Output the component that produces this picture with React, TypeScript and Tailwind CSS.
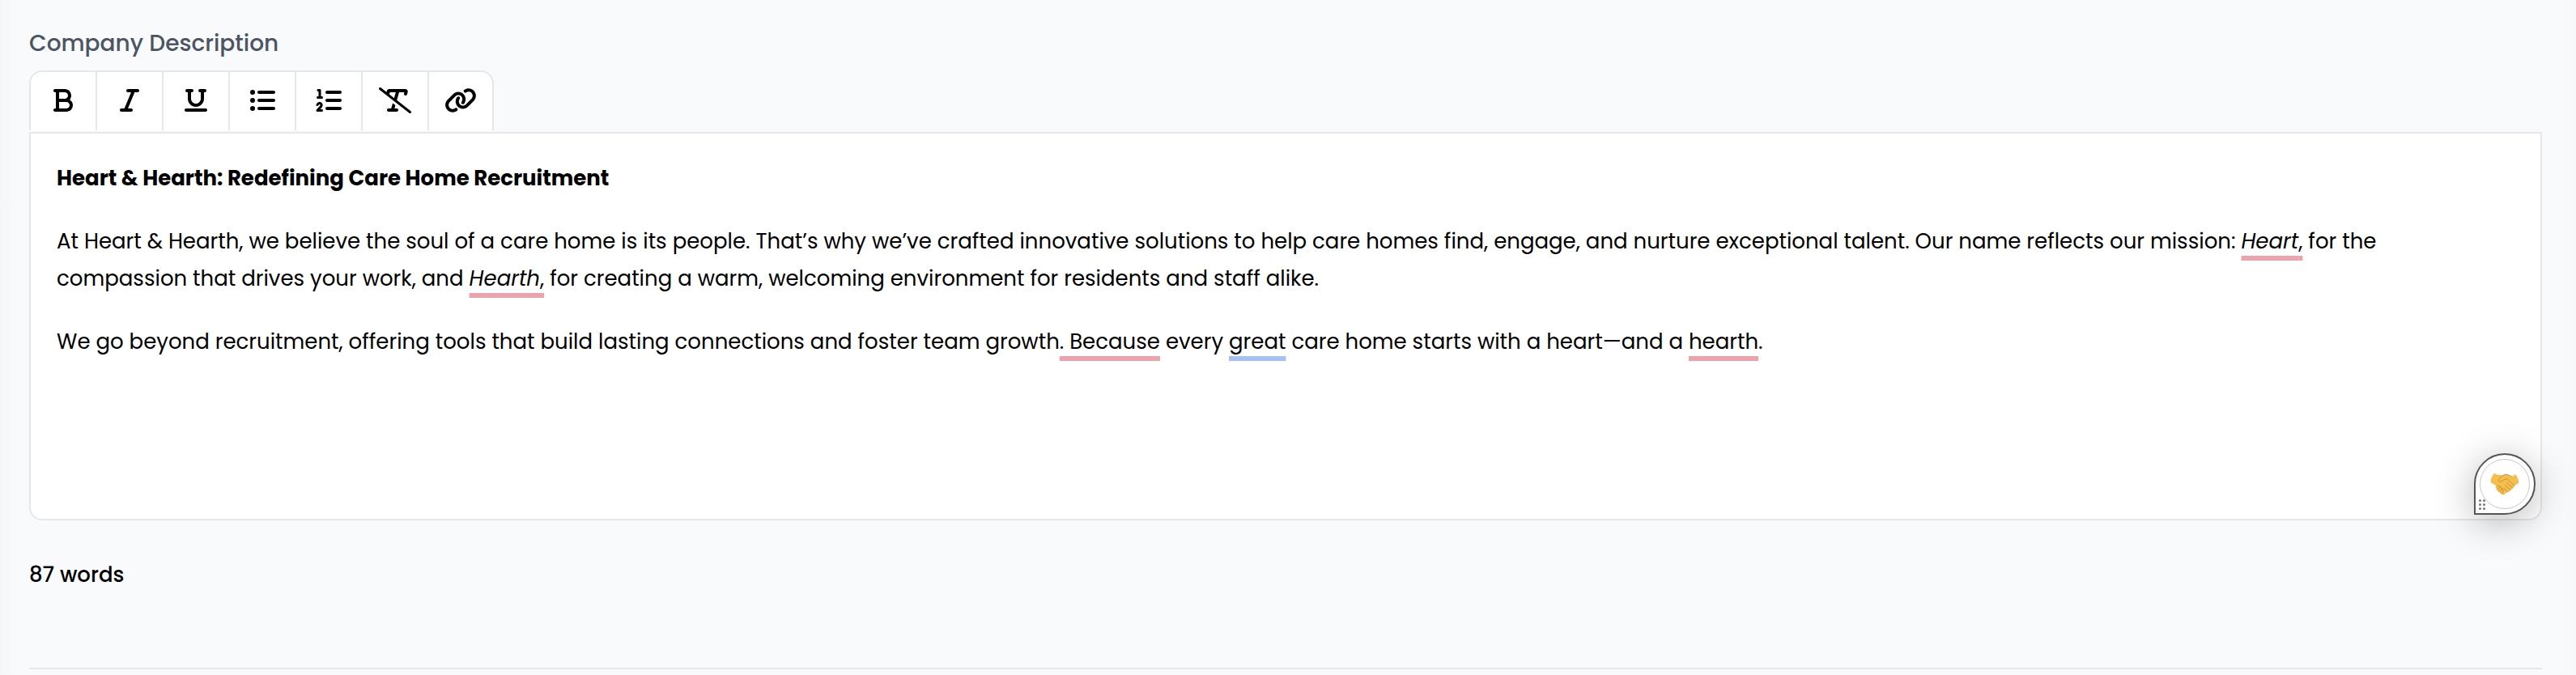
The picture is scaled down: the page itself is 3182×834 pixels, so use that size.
import { useState } from "react"
import type { IconType } from "react-icons"
import {
  FaBold,
  FaItalic,
  FaLink,
  FaListOl,
  FaListUl,
  FaTextSlash,
  FaUnderline,
} from "react-icons/fa6"

interface Tool {
  label: string
  icon: IconType
  size: string
}

const tools: Tool[] = [
  { label: "Bold", icon: FaBold, size: "h-8 w-6" },
  { label: "Italic", icon: FaItalic, size: "h-8 w-6" },
  { label: "Underline", icon: FaUnderline, size: "h-8 w-7" },
  { label: "Bulleted list", icon: FaListUl, size: "h-8 w-8" },
  { label: "Numbered list", icon: FaListOl, size: "h-8 w-8" },
  { label: "Clear formatting", icon: FaTextSlash, size: "h-8 w-10" },
  { label: "Link", icon: FaLink, size: "h-8 w-10" },
]

const error =
  "underline decoration-[#eba3ae] decoration-[6px] underline-offset-[9px] [text-decoration-skip-ink:none]"
const hint =
  "underline decoration-[#a7c0f2] decoration-[6px] underline-offset-[9px] [text-decoration-skip-ink:none]"

function Toolbar() {
  const [active, setActive] = useState("")

  return (
    <div
      role="toolbar"
      aria-label="Formatting"
      className="flex w-fit overflow-hidden rounded-t-2xl border-2 border-b-0 border-[#e5e7eb] bg-white"
    >
      {tools.map(({ label, icon: Icon, size }) => (
        <button
          key={label}
          type="button"
          aria-label={label}
          aria-pressed={active === label}
          onClick={() => setActive(active === label ? "" : label)}
          className="flex h-[72px] w-[82px] items-center justify-center border-r-2 border-[#e5e7eb] pb-0.5 last:w-[78px] last:border-r-0"
        >
          <Icon className={size} />
        </button>
      ))}
    </div>
  )
}

function Handshake() {
  return (
    <svg viewBox="0 0 36 28" className="h-7 w-9" fill="none" aria-hidden="true">
      <path
        d="M5 .8C7 1.800 8.500 2.600 10.500 2.800L15 3.200 19 2.200C22 2.200 24 4.200 26.500 4.200 28.500 4 30 3 31.500 2.200 33.500 5 35.300 8.500 35.500 12.500L30 16c.2 1.600-.8 2.800-2.300 2.800 0 1.700-1.200 2.700-2.700 2.400-.2 1.800-1.500 2.700-3.100 2.300-.7 1.300-1.900 1.700-3 1.400-.4 2.400-2.800 2.900-4.100 1.300-1.700.3-2.900-.6-3-2-1.800.1-2.900-1.100-2.600-2.600-1.800-.2-2.500-1.900-1.500-3.400L6.500 15.500.5 12C.6 7.500 2.500 3.500 5 .8Z"
        fill="#f4bf4c"
      />
      <path
        d="M25.500 4.200C23.500 4 22 2.200 19 2.200 16.500 2.800 13.500 5 11.500 7.500c-1.600 2.200-.8 3.800 1 3.700 2.800-.2 3.800-2.400 6-3.200L21 7.800l9 8M20.500 12.500l7.200 6.300M18.300 15.700l6.700 5.500M16.500 19.200l5.400 4.300M7.700 18.200l1.800-1.900c1.500-1 3 .2 2.300 1.700L9.200 21.600M11.800 18c1.700-.9 3 .4 2.300 1.900l-2.300 3.700M14.100 20.500c1.700-.6 2.600.6 2.100 1.900l-1.400 3.800"
        stroke="#d08f35"
        strokeWidth="1"
        strokeLinecap="round"
        strokeLinejoin="round"
      />
    </svg>
  )
}

function AssistantBadge() {
  return (
    <button
      type="button"
      aria-label="Writing assistant"
      className="absolute right-2 bottom-[7px] flex size-[76px] items-center justify-center rounded-full rounded-bl-none border-2 border-[#555555] bg-white shadow-[0_8px_48px_rgba(0,0,0,0.28)]"
    >
      <span className="flex size-[62px] items-center justify-center rounded-full border border-[#c8c8c8]">
        <Handshake />
      </span>
      <span className="absolute bottom-1 left-1 grid grid-cols-2 gap-0.5 bg-white">
        {[0, 1, 2, 3, 4, 5].map((dot) => (
          <span key={dot} className="size-[3px] rounded-full bg-[#777777]" />
        ))}
      </span>
    </button>
  )
}

export default function App() {
  return (
    <main className="min-h-screen bg-[linear-gradient(90deg,#f5f6f8,#f9fafc_24px,#f9fafc_calc(100%-24px),#f7f8fa)] pt-8 pr-[42px] pl-9 font-['Poppins','Inter',sans-serif] text-[26px] text-black">
      <label
        id="description-label"
        className="block h-[55px] text-[28px] leading-[44px] font-medium text-[#4b5563]"
      >
        Company Description
      </label>

      <Toolbar />

      <div className="relative mt-0.5">
        <div
          role="textbox"
          aria-multiline="true"
          aria-labelledby="description-label"
          contentEditable
          suppressContentEditableWarning
          spellCheck={false}
          className="flex min-h-[480px] flex-col gap-8 rounded-b-2xl border-2 border-[#e5e7eb] bg-white py-8 pr-16 pl-8 leading-[46px] outline-none"
        >
          <p className="font-bold">Heart &amp; Hearth: Redefining Care Home Recruitment</p>
          <p>
            At Heart &amp; Hearth, we believe the soul of a care home is its people. That’s why we’ve
            crafted innovative solutions to help care homes find, engage, and nurture exceptional
            talent. Our name reflects our mission:{" "}
            <span className={error}>
              <em>Heart</em>,
            </span>{" "}
            for the compassion that drives your work, and{" "}
            <span className={error}>
              <em>Hearth</em>,
            </span>{" "}
            for creating a warm, welcoming environment for residents and staff alike.
          </p>
          <p>
            We go beyond recruitment, offering tools that build lasting connections and foster team
            growth<span className={error}>. Because</span> every <span className={hint}>great</span>{" "}
            care home starts with a heart—and a <span className={error}>hearth</span>.
          </p>
        </div>
        <AssistantBadge />
      </div>

      <p className="mt-11 leading-[46px] font-medium">87 words</p>
      <hr className="mt-[92px] border-t-2 border-[#e5e7eb]" />
    </main>
  )
}
